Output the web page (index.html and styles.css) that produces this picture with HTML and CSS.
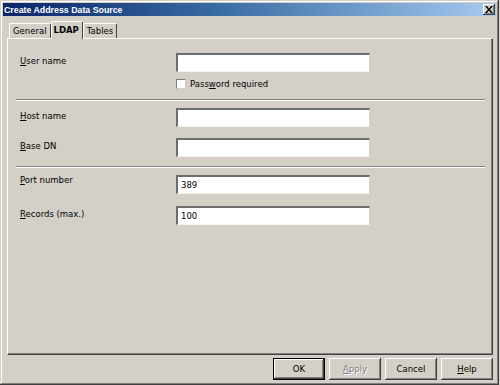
FILE: index.html
```html
<!DOCTYPE html>
<html lang="en">
<head>
  <meta charset="UTF-8">
  <title>Create Address Data Source</title>
  <link rel="stylesheet" href="styles.css">
</head>
<body>
  <div class="window">
    <div class="titlebar">
      <span class="title">Create Address Data Source</span>
      <span class="close">
        <svg width="8" height="7" viewBox="0 0 8 7"><path d="M0 0h2l2 2.5L6 0h2L5 3.5 8 7H6L4 4.5 2 7H0l3-3.5z" fill="#000"/></svg>
      </span>
    </div>

    <div class="tabs">
      <div class="tab">General</div>
      <div class="tab active">LDAP</div>
      <div class="tab">Tables</div>
    </div>

    <div class="panel">
      <div class="row">
        <label class="label"><u>U</u>ser name</label>
        <div class="field"></div>
      </div>
      <div class="check-row">
        <span class="checkbox"></span>
        <span>Pass<u>w</u>ord required</span>
      </div>

      <div class="separator"></div>

      <div class="row first">
        <label class="label"><u>H</u>ost name</label>
        <div class="field"></div>
      </div>
      <div class="row gap-lg">
        <label class="label"><u>B</u>ase DN</label>
        <div class="field"></div>
      </div>

      <div class="separator sep-2"></div>

      <div class="row first">
        <label class="label high"><u>P</u>ort number</label>
        <div class="field">389</div>
      </div>
      <div class="row gap-xl">
        <label class="label"><u>R</u>ecords (max.)</label>
        <div class="field">100</div>
      </div>
    </div>

    <div class="buttons">
      <button class="btn default">OK</button>
      <button class="btn disabled"><u>A</u>pply</button>
      <button class="btn">Cancel</button>
      <button class="btn"><u>H</u>elp</button>
    </div>
  </div>
</body>
</html>
```

FILE: styles.css
```css
:root {
  --face: #d4d0c8;
  --shadow: #808080;
  --dark: #404040;
  --light: #ffffff;
}

* {
  margin: 0;
  padding: 0;
  box-sizing: border-box;
}

body {
  background: var(--face);
  font-family: "DejaVu Sans", "Liberation Sans", sans-serif;
  font-size: 8.5px;
  color: #000;
}

u {
  text-decoration: underline;
  text-underline-offset: 1px;
}

.window {
  width: 499px;
  height: 385px;
  padding: 3px 3px 0 3px;
  background: var(--face);
  box-shadow: inset -1px -1px var(--dark), inset 1px 1px var(--face),
    inset -2px -2px var(--shadow), inset 2px 2px var(--light);
}

/* title bar */
.titlebar {
  height: 13px;
  display: flex;
  align-items: center;
  justify-content: space-between;
  padding: 0 1px 0 1px;
  background: linear-gradient(to right, #0a246a, #3a6ea5 45%, #a6caf0);
}

.title {
  font-family: "Liberation Sans", Arial, sans-serif;
  font-weight: 700;
  font-size: 8.8px;
  color: #fff;
}

.close {
  width: 12px;
  height: 11px;
  display: flex;
  align-items: center;
  justify-content: center;
  background: var(--face);
  box-shadow: inset -1px -1px var(--dark), inset 1px 1px var(--light),
    inset -2px -2px var(--shadow);
}

/* tabs */
.tabs {
  display: flex;
  align-items: flex-end;
  margin: 5px 0 0 4px;
  padding-left: 2px;
  height: 17px;
}

.tab {
  height: 15px;
  padding: 0 3px;
  line-height: 15px;
  background: var(--face);
  border-top: 1px solid var(--light);
  border-left: 1px solid var(--light);
  border-right: 1px solid var(--dark);
  border-radius: 2px 2px 0 0;
}

.tab.active {
  height: 18px;
  margin-bottom: -1px;
  line-height: 16px;
  font-weight: 700;
  position: relative;
  z-index: 1;
  padding: 0 3px 0 2px;
}

/* page */
.panel {
  height: 317px;
  margin: 0 3px 0 4px;
  padding: 14px 7px 0 12px;
  border-top: 1px solid var(--light);
  border-left: 1px solid var(--light);
  border-right: 1px solid var(--dark);
  border-bottom: 1px solid var(--dark);
  box-shadow: inset -1px -1px var(--shadow);
}

.row {
  display: flex;
  align-items: flex-start;
}

.row.first {
  margin-top: 7px;
}

.row.gap-lg {
  margin-top: 11px;
}

.row.gap-xl {
  margin-top: 12px;
}

.label {
  width: 156px;
  line-height: 16px;
}

.label.high {
  line-height: 10px;
}

.field {
  width: 194px;
  height: 19px;
  padding: 0 3px;
  line-height: 17px;
  background: #fff;
  border-top: 2px solid #6d6d6d;
  border-left: 2px solid #6d6d6d;
  border-right: 1px solid var(--face);
  border-bottom: 1px solid #f4f2ec;
}

.check-row {
  display: flex;
  align-items: center;
  gap: 4px;
  margin: 7px 0 0 156px;
  height: 10px;
}

.checkbox {
  width: 10px;
  height: 10px;
  background: #fff;
  border-top: 1px solid var(--shadow);
  border-left: 1px solid var(--shadow);
  border-right: 1px solid var(--face);
  border-bottom: 1px solid var(--face);
}

.separator {
  height: 2px;
  margin: 10px 0 0 -4px;
  border-top: 1px solid var(--shadow);
  border-bottom: 1px solid var(--light);
}

.separator.sep-2 {
  margin-top: 9px;
}

/* buttons */
.buttons {
  display: flex;
  justify-content: flex-end;
  gap: 4px;
  margin: 3px 3px 0 4px;
}

.btn {
  width: 52px;
  height: 22px;
  font-family: inherit;
  font-size: 8.5px;
  color: #000;
  background: var(--face);
  border: none;
  box-shadow: inset -1px -1px var(--dark), inset 1px 1px var(--light),
    inset -2px -2px var(--shadow);
}

.btn.default {
  border: 1px solid #000;
}

.btn.disabled {
  color: var(--shadow);
  text-shadow: 1px 1px var(--light);
}
```
